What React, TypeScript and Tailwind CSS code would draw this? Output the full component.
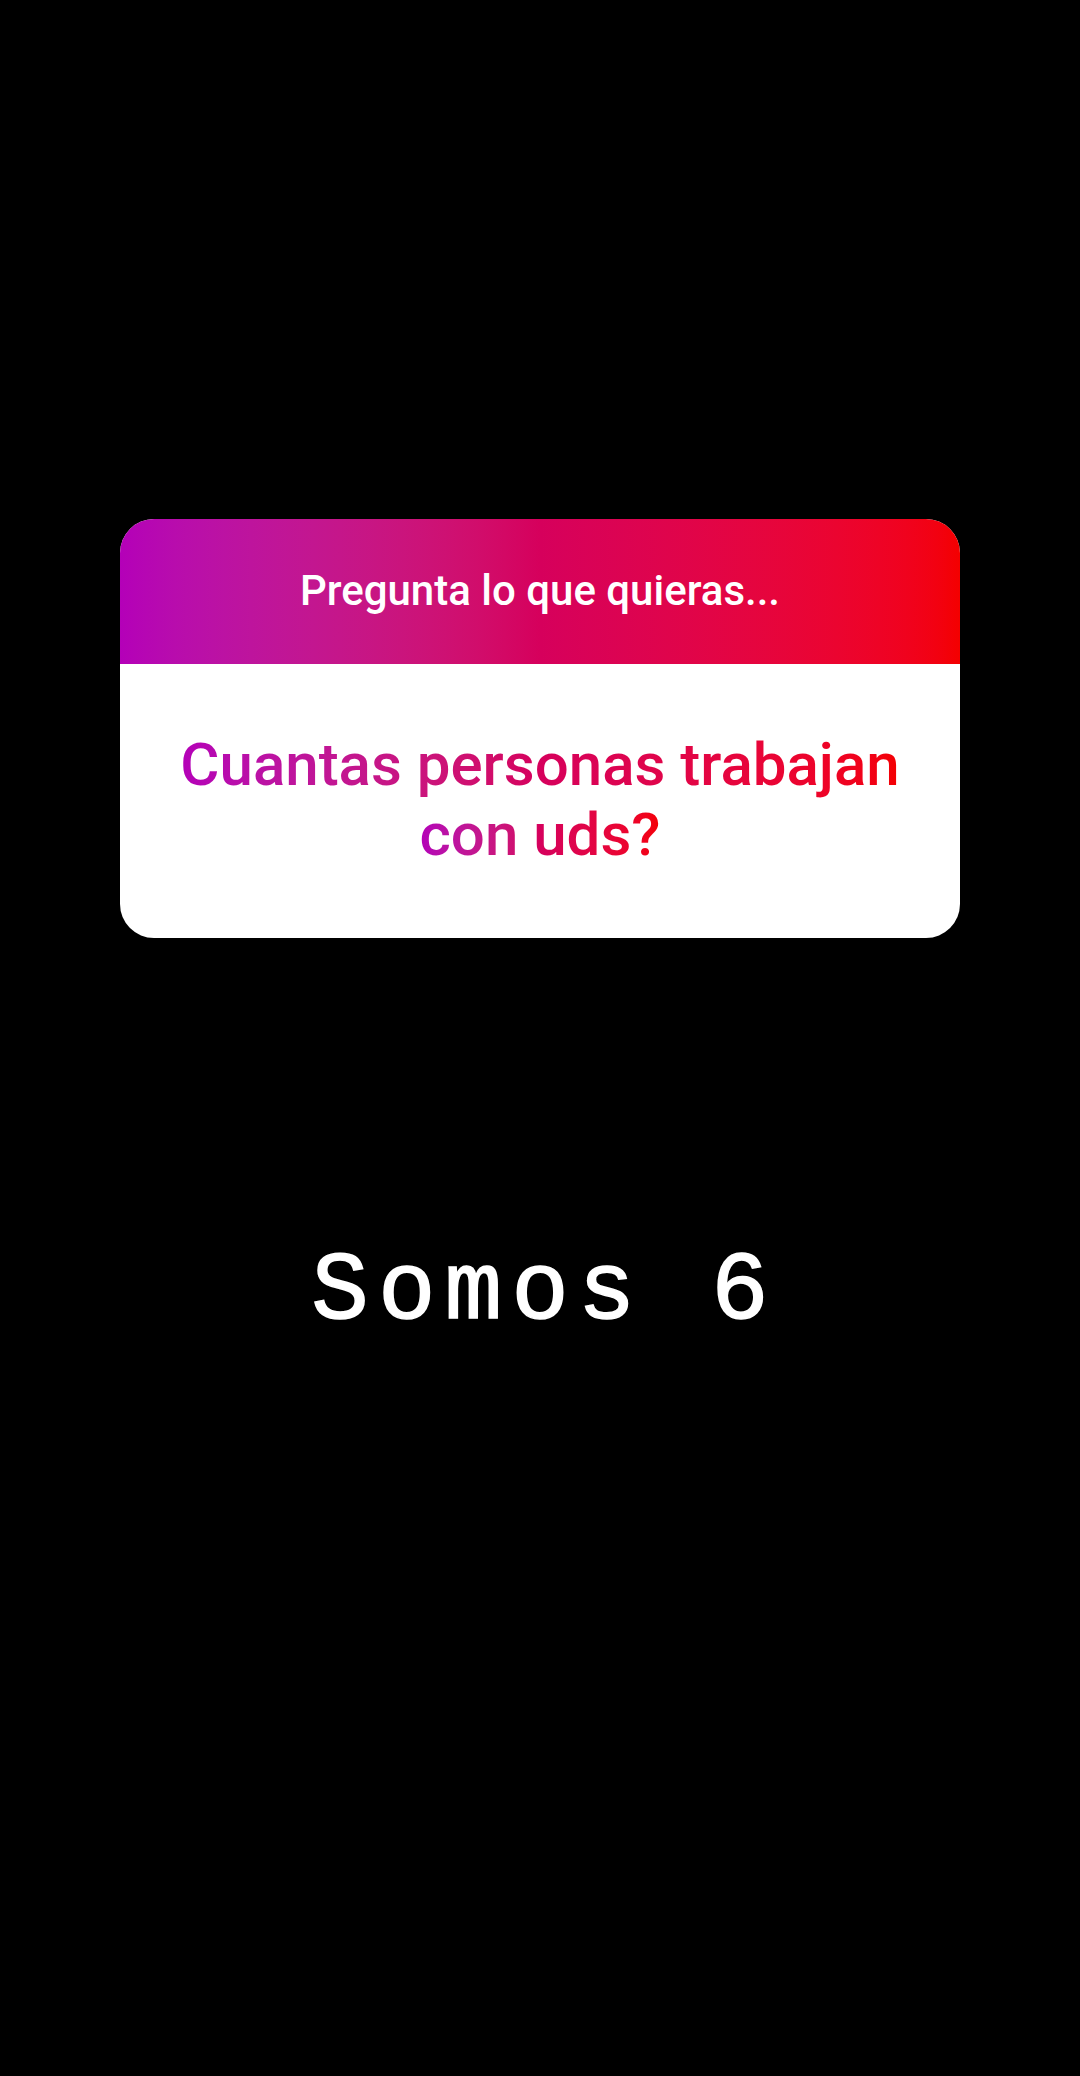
export default function App() {
  const grad = 'bg-gradient-to-r from-[#b400b8] via-[#d6005c] to-[#f40000]';

  return (
    <div className="w-[1080px] h-[2076px] bg-black flex flex-col items-center pt-[519px] font-['Roboto',sans-serif]">
      {/* Question sticker */}
      <div className="w-[840px] rounded-[34px] overflow-hidden bg-white">
        <div className={`${grad} h-[145px] flex items-center justify-center`}>
          <span className="text-white text-[42px] font-medium leading-none pb-[2px]">Pregunta lo que quieras...</span>
        </div>
        <div className="h-[274px] flex flex-col items-center justify-center pb-[2px]">
          <span className={`${grad} bg-clip-text text-transparent text-[60px] font-medium leading-[70px]`}>Cuantas personas trabajan</span>
          <span className={`${grad} bg-clip-text text-transparent text-[60px] font-medium leading-[70px]`}>con uds?</span>
        </div>
      </div>

      {/* Reply */}
      <div className="mt-[307px] pl-[9px] text-white text-[96px] leading-none tracking-[9px] font-['Liberation_Mono',monospace] [-webkit-text-stroke:1.5px_white] whitespace-pre">
        Somos 6
      </div>
    </div>
  );
}
